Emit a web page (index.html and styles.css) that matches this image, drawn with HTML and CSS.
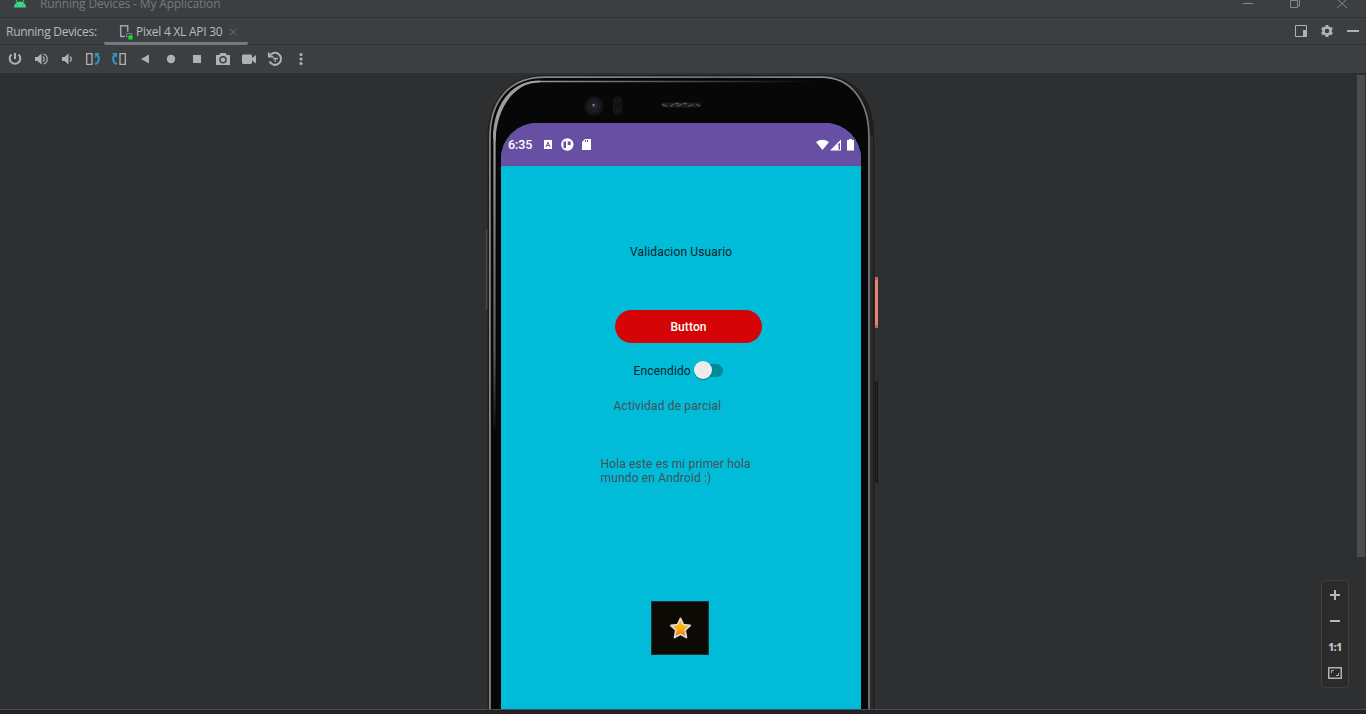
FILE: index.html
```html
<!DOCTYPE html>
<html lang="es">
<head>
<meta charset="utf-8">
<title>Running Devices - My Application</title>
<link rel="stylesheet" href="styles.css">
</head>
<body>
<div class="window">
  <header class="titlebar">
    <svg class="android" width="14" height="9" viewBox="0 0 14 9"><path d="M1 7.5C1 4.5 3.3 1.5 7 1.5S13 4.5 13 7.5z" fill="#3ddc84"/><path d="M3 0l2 3M11 0L9 3" stroke="#3ddc84"/><path d="M4 4.5h1v1H4zM9 4.5h1v1H9z" fill="#28764a"/></svg>
    <span class="title">Running Devices - My Application</span>
    <svg class="controls" width="110" height="17" viewBox="1243 0 110 17" fill="none" stroke="#85888a"><path d="M1243 3.500h10M1290.500 .500h7v7h-7zM1292.500 0v-2M1299.500 -1v7h-2M1337 -1l10 9M1347 -1l-10 9"/></svg>
  </header>

  <nav class="tabs">
    <span class="tabs-label">Running Devices:</span>
    <div class="tab">
      <svg class="device" width="14" height="16" viewBox="0 0 14 16" fill="none"><path d="M6 12.500H1.700V1.700h7v6" stroke="#9aa7b0" stroke-width="1.500"/><path d="M7.500 12V9.500h5V12M7 12.500h3" stroke="#8577a5"/><path d="M9.500 11.500h4v4h-4z" fill="#00ef12"/></svg>
      <span class="tab-name">Pixel 4 XL API 30</span>
      <svg class="close" width="8" height="8" viewBox="0 0 8 8"><path d="M.5.5l7 7M7.500.5l-7 7" stroke="#6a6d6f"/></svg>
    </div>
    <svg class="tab-tools" width="64" height="26" viewBox="1295 18 64 26">
      <path d="M1295.500 25.500h11v11h-11z" fill="none" stroke="#b0b2b4"/><path d="M1303 30h4v7h-4z" fill="#b0b2b4"/>
      <g transform="translate(1327 31)" fill="none" stroke="#b0b2b4"><circle r="3.500" stroke-width="2.600"/><path d="M0-4v-2M0 4v2M3.500-2l1.700-1M3.500 2l1.700 1M-3.500-2l-1.700-1M-3.500 2l-1.700 1" stroke-width="2.800"/></g>
      <path d="M1347 30h12v2h-12z" fill="#b0b2b4"/>
    </svg>
  </nav>

  <div class="toolbar">
    <svg width="16" height="16" viewBox="0 0 16 16"><path d="M4.500 3.500a5.300 5.300 0 1 0 7 0M8 2v6" fill="none" stroke="#afb1b3" stroke-width="2"/></svg>
    <svg width="16" height="16" viewBox="0 0 16 16"><path d="M2 6h2.500l4-3.500v11l-4-3.500H2z" fill="#afb1b3"/><path d="M10 5.500q2.500 2.500 0 5M10.500 3c5 1.500 5 8.500 0 10" fill="none" stroke="#afb1b3" stroke-width="1.200"/></svg>
    <svg width="16" height="16" viewBox="0 0 16 16"><path d="M3 6h2.500l4-3.500v11l-4-3.500H3z" fill="#afb1b3"/><path d="M11 5.500q2.500 2.500 0 5" fill="none" stroke="#afb1b3" stroke-width="1.300"/></svg>
    <svg width="16" height="16" viewBox="0 0 16 16" fill="none"><path d="M1.700 2.700h5.300v10.600H1.700z" stroke="#afb1b3" stroke-width="1.300"/><path d="M10 13.200c5-2.200 4.500-7 2.300-9.200" stroke="#3592c4" stroke-width="2"/><path d="M10 2h5L10 7z" fill="#3592c4"/></svg>
    <svg width="16" height="16" viewBox="0 0 16 16" fill="none"><path d="M9 2.700h5.300v10.600H9z" stroke="#afb1b3" stroke-width="1.300"/><path d="M6 13.200C1 11 1.500 6.200 3.700 4" stroke="#3592c4" stroke-width="2"/><path d="M6 2H1l5 5z" fill="#3592c4"/></svg>
    <svg width="16" height="16" viewBox="0 0 16 16"><path d="M12 3.500v9L4 8z" fill="#afb1b3"/></svg>
    <svg width="16" height="16" viewBox="0 0 16 16"><circle cx="8" cy="8" r="4.200" fill="#afb1b3"/></svg>
    <svg width="16" height="16" viewBox="0 0 16 16"><path d="M4 4h8v8H4z" fill="#afb1b3"/></svg>
    <svg width="16" height="16" viewBox="0 0 16 16"><path d="M1 4h3l1.500-2h5L12 4h3v10H1z" fill="#afb1b3"/><circle cx="8" cy="8.700" r="3" fill="#afb1b3" stroke="#3c3f41" stroke-width="1.500"/></svg>
    <svg width="16" height="16" viewBox="0 0 16 16"><path d="M1 4.500L2 3.500h8l1 1V7l4-3v8.500l-4-3V12l-1 1H2l-1-1z" fill="#afb1b3"/></svg>
    <svg width="16" height="16" viewBox="0 0 16 16" fill="none" stroke="#afb1b3"><path d="M2.500 5.500a6 6 0 1 1 .1 5" stroke-width="2"/><path d="M1.800 1.500V5.700H6.500" stroke-width="1.800"/><path d="M11 7.500H8.200V11M8.200 7.500H6" stroke-width="1.300"/></svg>
    <svg width="16" height="16" viewBox="0 0 16 16"><g fill="#afb1b3"><circle cx="8" cy="3.500" r="1.600"/><circle cx="8" cy="8" r="1.600"/><circle cx="8" cy="12.500" r="1.600"/></g></svg>
  </div>

  <main class="workspace">
    <div class="phone">
      <svg class="frame" width="410" height="636" viewBox="480 73 410 636" fill="none">
        <defs>
          <linearGradient id="rim" x1="489" y1="76" x2="870" y2="76" gradientUnits="userSpaceOnUse"><stop offset="0" stop-color="#858585"/><stop offset=".2" stop-color="#858588"/><stop offset=".6" stop-color="#6f7073"/><stop offset=".9" stop-color="#8a8b8e"/><stop offset="1" stop-color="#777573"/></linearGradient>
          <linearGradient id="innerSide" x1="0" y1="120" x2="0" y2="430" gradientUnits="userSpaceOnUse"><stop offset="0" stop-color="#aaa"/><stop offset=".4" stop-color="#777875"/><stop offset=".75" stop-color="#5c5d5b"/><stop offset="1" stop-color="#0d0e0f"/></linearGradient>
          <linearGradient id="innerTop" x1="540" y1="0" x2="810" y2="0" gradientUnits="userSpaceOnUse"><stop offset="0" stop-color="#999"/><stop offset=".5" stop-color="#505052"/><stop offset="1" stop-color="#08090a"/></linearGradient>
        </defs>
        <path d="M487.500 709V137C487.500 103 506 75 545 75H820C857 75 874 100 874 136V709z" fill="#1c1e20"/>
        <path d="M489 709V138C489 101 509 76.500 545 76.500H821C853 76.500 870 101 870 137V709z" fill="#070708"/>
        <path d="M489.900 709V138C489.900 101 509 77.200 545 77.200H821C852 77.200 869 102 869 137V709" stroke="url(#rim)" stroke-width="1.800"/>
        <path d="M494.500 430V139C494.500 111 508 81.500 540 81.500" stroke="url(#innerSide)" stroke-width="2.200"/>
        <path d="M493 138C493 110 507 81 540 81C512 84 496 110 495.500 142z" fill="#9d9d9c"/>
        <path d="M540 81.500H810" stroke="url(#innerTop)" stroke-width="1.600"/>
        <path d="M871.500 135V709" stroke="#292c2e" stroke-width="3"/><path d="M874.500 145V709" stroke="#242628"/>
        <path d="M486.500 229V309" stroke="#494a4b" stroke-width="1.500"/>
        <circle cx="594" cy="106" r="9.500" fill="#151516"/><circle cx="594" cy="106" r="5.500" fill="#1c1c20" stroke="#242426"/><circle cx="594.500" cy="106" r="2.500" fill="#29294b"/><circle cx="593.500" cy="105" r="1" fill="#9596a1"/>
        <rect x="613.500" y="96.500" width="8" height="18" rx="4" fill="#101011" stroke="#19191a"/><circle cx="617.500" cy="101" r="2" stroke="#202021"/><circle cx="617.500" cy="110" r="2" stroke="#202021"/>
        <rect x="661" y="102.500" width="40" height="5" rx="2.500" fill="#1c1c1d"/><path d="M662 104l5 2.500M670 106.500l4-2.500M675 103.500h4M677 106.500l5-2.500M683 103.500h4M688 106.500l5-2M696 104.500l4 1.500" stroke="#555" stroke-width="1.300"/>
        <rect x="875" y="277" width="3" height="51" rx="1" fill="#e98472"/><path d="M875 277h3v3h-3zM875 325h3v3h-3z" fill="#d85f4c"/>
        <rect x="875.500" y="381.500" width="2" height="101" rx="1" fill="#26292a" stroke="#111314"/>
      </svg>
      <div class="screen">
        <div class="status">
          <span class="clock">6:35</span>
          <svg class="notes" width="46" height="13" viewBox="0 0 46 13"><path d="M0 2h8v9H0z" fill="#fff"/><path d="M2 9l2-5 2 5M3 7.500h2" fill="none" stroke="#6750a4"/><circle cx="23.300" cy="6.500" r="6.200" fill="#fff"/><path d="M19.500 3.500h2.500v6.500h-2.500zM23.700 3.500h3v3.500h-3z" fill="#6750a4"/><path d="M38 4l3-3h6v11h-9z" fill="#fff"/><path d="M41.500 2v2M43.500 2v2" stroke="#6750a4"/></svg>
          <svg class="signals" width="39" height="12" viewBox="0 0 39 12"><path d="M0 3Q6.500-1.500 13 3L6.500 11z" fill="#fff"/><path d="M14 11.500L25 .5v11z" fill="#fff"/><path d="M22 5.500l2-2v7h-2z" fill="#6750a4"/><path d="M22 6h1v4h-1z" fill="#b7a9d4"/><path d="M31 1h2V0h3v1h2v10.500h-7z" fill="#fff"/></svg>
        </div>
        <div class="app">
          <p class="heading">Validacion Usuario</p>
          <button class="action">Button</button>
          <div class="switch-row"><span>Encendido</span><span class="track"><i class="thumb"></i></span></div>
          <p class="activity">Actividad de parcial</p>
          <p class="hello">Hola este es mi primer hola<br>mundo en Android :)</p>
          <div class="picture">
            <svg width="24" height="24" viewBox="0 0 24 24"><defs><linearGradient id="gold" x2="0" y2="1"><stop offset="0" stop-color="#ffc400"/><stop offset=".55" stop-color="#ffb000"/><stop offset="1" stop-color="#f45b12"/></linearGradient></defs><path d="M12.500 2.500l2.900 6.200 6.700.8-5 4.700 1.300 7.300-5.900-3.300-5.900 3.300 1.300-7.300-5-4.700 6.700-.8z" fill="url(#gold)" stroke="#ddd8d5" stroke-width="1.800" stroke-linejoin="round"/></svg>
          </div>
        </div>
      </div>
    </div>
    <div class="scrollbar"></div>
    <div class="zoom">
      <svg width="14" height="14" viewBox="0 0 14 14"><path d="M2 7h10M7 2v10" stroke="#b5b7b9" stroke-width="2"/></svg>
      <svg width="14" height="14" viewBox="0 0 14 14"><path d="M2 7h10" stroke="#b5b7b9" stroke-width="2"/></svg>
      <span class="ratio">1:1</span>
      <svg width="14" height="14" viewBox="0 0 14 14" fill="none" stroke="#b0b2b4"><path d="M.75 1.750h12.500v10.500H.75z" stroke-width="1.500"/><path d="M3.500 7V4.500H6M10.500 7v2.500H8"/></svg>
    </div>
  </main>
  <footer class="bottom"></footer>
</div>
</body>
</html>
```

FILE: styles.css
```css
* { box-sizing: border-box; }
body { margin: 0; background: #2e2f31; font-family: "Open Sans", "Noto Sans", sans-serif; font-size: 12px; color: #bbb; }
p { margin: 0; }
svg { display: block; flex: none; }
.window { width: 1366px; height: 714px; display: flex; flex-direction: column; overflow: hidden; }
.titlebar { height: 18px; flex: none; display: flex; background: #3c3f41; border-bottom: 1px solid #323232; overflow: hidden; }
.android { margin-left: 13px; }
.title { margin: -4px 0 0 13px; line-height: 16px; color: #77797a; font-size: 12px; letter-spacing: -.14px; white-space: nowrap; }
.controls { margin: 0 13px 0 auto; }
.tabs { height: 27px; flex: none; display: flex; background: #3c3f41; border-bottom: 1px solid #323232; }
.tabs-label { width: 98px; padding-left: 6px; line-height: 28px; letter-spacing: -.28px; white-space: nowrap; }
.tab { width: 144px; height: 27px; margin-left: 6px; padding: 0 11px 0 15px; display: flex; align-items: center; border-bottom: 3px solid #747a80; border-radius: 0 0 2px 2px; }
.device { margin-top: 3px; }
.tab-name { margin-left: 3px; line-height: 27px; padding-top: 3px; letter-spacing: -.25px; white-space: nowrap; }
.close { margin: 4px 0 0 auto; }
.tab-tools { margin: 0 7px 0 auto; }
.toolbar { height: 28px; flex: none; padding: 0 7px; display: flex; align-items: center; gap: 10px; background: #3c3f41; }
.workspace { height: 636px; flex: none; position: relative; display: flex; background: #2e2f31; }
.phone { width: 410px; height: 636px; margin-left: 480px; padding: 50px 29px 0 21px; position: relative; overflow: hidden; }
.frame { position: absolute; left: 0; top: 0; }
.screen { position: relative; height: 586px; border-radius: 36px 36px 0 0; overflow: hidden; background: #00bcd8; font-family: Roboto, sans-serif; color: #0b2329; }
.status { height: 43px; display: flex; align-items: center; padding: 0 6px 0 7px; background: #6750a4; color: #fff; }
.clock { width: 36px; font-size: 12.500px; font-weight: 500; letter-spacing: -.1px; }
.notes { overflow: visible; }
.signals { margin-left: auto; }
.app { height: 543px; display: flex; flex-direction: column; align-items: flex-start; font-size: 12px; line-height: 14px; letter-spacing: .15px; white-space: nowrap; }
.heading { margin: 79px 0 0 129px; }
.action { width: 147px; height: 33px; margin: 51px 0 0 114px; padding: 0; border: 0; border-radius: 17px; background: #d50507; color: #fff; font: 500 12px Roboto, sans-serif; letter-spacing: .1px; }
.switch-row { height: 18px; margin: 18px 0 0 132.500px; display: flex; align-items: center; }
.switch-row span:first-child { padding-top: 1px; }
.track { width: 27px; height: 13px; margin-left: 5.500px; border-radius: 7px; background: #00899b; display: flex; align-items: center; }
.thumb { width: 18px; height: 18px; flex: none; margin-left: -2px; border-radius: 50%; background: #ececec; box-shadow: 0 1px 1px #087f8f; }
.activity { margin: 20px 0 0 112.500px; color: #455058; }
.hello { margin: 44px 0 0 99.500px; color: #455058; }
.picture { width: 58px; height: 54px; margin: 116px 0 0 150px; display: flex; align-items: center; justify-content: center; background: #0b0a05; border: 1px solid #11333a; }
.scrollbar { width: 8px; height: 482px; margin: 2px 1px 0 auto; background: #4b4c4e; }
.zoom { position: absolute; right: 17px; bottom: 21px; width: 28px; height: 108px; padding: 7px 0; display: flex; flex-direction: column; align-items: center; gap: 12px; border: 1px solid #3e4042; border-radius: 4px; background: #2b2b2b; }
.ratio { height: 14px; line-height: 14px; font-size: 10px; font-weight: 800; letter-spacing: -.4px; }
.bottom { flex: 1; background: #232127; border-top: 1px solid #4b4c4d; }
```
